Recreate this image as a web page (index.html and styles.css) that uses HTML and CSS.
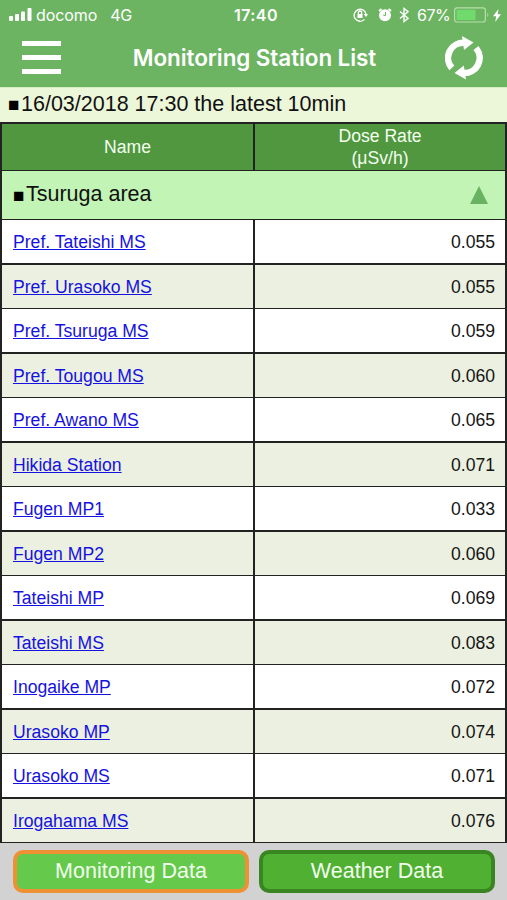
FILE: index.html
```html
<!DOCTYPE html>
<html lang="en">
<head>
<meta charset="utf-8">
<title>Monitoring Station List</title>
<link rel="stylesheet" href="styles.css">
</head>
<body>
<div class="app">
  <header class="top">
    <div class="status">
      <div class="status-left">
        <svg class="signal" width="24" height="14" viewBox="0 0 24 14" fill="#fff"><rect x="0" y="8" width="4" height="5" rx="1"/><rect x="6" y="6" width="4" height="7" rx="1"/><rect x="12" y="3.500" width="4" height="9.500" rx="1"/><rect x="18.500" y="0" width="4" height="13" rx="1"/></svg>
        <span class="carrier">docomo</span><span class="network">4G</span>
      </div>
      <span class="clock">17:40</span>
      <div class="status-right">
        <svg width="16" height="16" viewBox="0 0 16 16" fill="none" stroke="#fff" stroke-width="1.300"><path d="M11.500 12.400A6 6 0 1 1 13 7"/><path d="M10.800 7h4.400l-2.200 3z" fill="#fff" stroke="none"/><rect x="4.500" y="7" width="5" height="4" fill="#fff" stroke="none"/><path d="M5.400 7V5.600a1.600 1.600 0 0 1 3.200 0V7"/></svg>
        <svg class="alarm" width="14" height="16" viewBox="0 0 14 16"><circle cx="7" cy="8.200" r="6" fill="#fff"/><path d="M1 4L3.500 2M13 4L10.500 2" stroke="#fff" stroke-width="2"/><path d="M7.500 5v3.700L5.200 8" fill="none" stroke="#6cb462" stroke-width="1"/></svg>
        <svg class="bluetooth" width="10" height="16" viewBox="0 0 10 16"><path d="M1 4.500l8 6.800L5 14.500v-13l4 3.200-8 6.800" fill="none" stroke="#fff" stroke-width="1.400"/></svg>
        <span class="percent">67%</span>
        <svg width="36" height="16" viewBox="0 0 36 16"><rect x=".6" y=".8" width="30.800" height="14.200" rx="2.500" fill="none" stroke="#b4dfa9" stroke-width="1.200"/><rect x="2.500" y="2.800" width="19" height="10.200" fill="#70da6d"/><path d="M33.300 5.500q2 2.400 0 4.800z" fill="#b4dfa9"/></svg>
        <svg class="bolt" width="8" height="13" viewBox="0 0 8 13"><path d="M5.500 0L0 7.200h3.200L2.200 13 8 5.200H4.700z" fill="#fff"/></svg>
      </div>
    </div>
    <div class="nav">
      <div class="menu"><i></i><i></i><i></i></div>
      <h1>Monitoring Station List</h1>
      <svg class="refresh" width="38" height="44" viewBox="0 0 38 44"><g fill="none" stroke="#fff" stroke-width="6.500"><path d="M6.800 32A15.200 15.200 0 0 1 20 6.900"/><path d="M31 12A15.200 15.200 0 0 1 18 37"/></g><path d="M17 0L28.500 6.500 19 14zM21 43.500L9.500 37l9.300-7.500z" fill="#fff"/></svg>
    </div>
  </header>
  <div class="stamp"><span class="square">■</span><span class="stamp-text">16/03/2018 17:30 the latest 10min</span></div>
  <main class="table">
    <div class="row head"><div>Name</div><div>Dose Rate<br>(μSv/h)</div></div>
    <div class="area"><span class="square">■</span><span class="area-text">Tsuruga area</span><svg class="up" width="18" height="18" viewBox="0 0 18 18"><path d="M9 0l9 18H0z" fill="#69b262"/></svg></div>
    <div class="row"><div><a href="#">Pref. Tateishi MS</a></div><div>0.055</div></div>
    <div class="row"><div><a href="#">Pref. Urasoko MS</a></div><div>0.055</div></div>
    <div class="row"><div><a href="#">Pref. Tsuruga MS</a></div><div>0.059</div></div>
    <div class="row"><div><a href="#">Pref. Tougou MS</a></div><div>0.060</div></div>
    <div class="row"><div><a href="#">Pref. Awano MS</a></div><div>0.065</div></div>
    <div class="row"><div><a href="#">Hikida Station</a></div><div>0.071</div></div>
    <div class="row"><div><a href="#">Fugen MP1</a></div><div>0.033</div></div>
    <div class="row"><div><a href="#">Fugen MP2</a></div><div>0.060</div></div>
    <div class="row"><div><a href="#">Tateishi MP</a></div><div>0.069</div></div>
    <div class="row"><div><a href="#">Tateishi MS</a></div><div>0.083</div></div>
    <div class="row"><div><a href="#">Inogaike MP</a></div><div>0.072</div></div>
    <div class="row"><div><a href="#">Urasoko MP</a></div><div>0.074</div></div>
    <div class="row"><div><a href="#">Urasoko MS</a></div><div>0.071</div></div>
    <div class="row"><div><a href="#">Irogahama MS</a></div><div>0.076</div></div>
  </main>
  <footer class="tabs"><div class="tab active">Monitoring Data</div><div class="tab">Weather Data</div></footer>
</div>
</body>
</html>
```

FILE: styles.css
```css
* { box-sizing: border-box; }
body { margin: 0; font-family: "Liberation Sans", Arial, sans-serif; }
.app { width: 507px; height: 900px; display: flex; flex-direction: column; overflow: hidden; background: #d2d2d2; }
.top { height: 87px; background: #6cb462; color: #fff; font-family: Inter, sans-serif; }
.status { height: 30px; display: grid; grid-template-columns: 1fr auto 1fr; align-items: center; padding: 0 6px 0 9px; }
.status-left, .status-right { display: flex; align-items: center; }
.status-right { justify-content: flex-end; }
.carrier { margin-left: 3px; font-size: 16px; letter-spacing: -.1px; }
.network { margin-left: 13px; font-size: 16px; letter-spacing: -.3px; }
.clock { position: relative; left: 1px; font-size: 16px; font-weight: 600; letter-spacing: .4px; }
.alarm { margin-left: 9px; }
.bluetooth { margin-left: 7px; }
.percent { margin: 0 4px 0 8px; font-size: 16px; letter-spacing: -.6px; }
.bolt { margin-left: 3px; }
.nav { height: 57px; display: flex; align-items: center; padding: 0 24px 0 22px; }
.menu { width: 39px; height: 33px; margin-top: -2px; display: flex; flex-direction: column; justify-content: space-between; }
.menu i { height: 5px; background: #fff; }
h1 { flex: 1; margin: 0; padding: 0 0 2px 3px; text-align: center; font-size: 22.500px; font-weight: 600; letter-spacing: -.1px; }
.refresh { margin-top: -2px; }
.stamp { height: 35px; display: flex; align-items: center; padding: 0 8px 2px; background: #ecf6d9; border-top: 1px solid #d9edc4; font-size: 21.500px; color: #111; }
.square { font-size: 19px; line-height: 20px; width: 13px; padding-top: 2px; color: #000; }
.table { height: 721px; display: grid; grid-template-rows: 47px 49px repeat(14, 44.5px); padding-top: 2px; background: #222; }
.row { display: grid; grid-template-columns: 251px 250px; column-gap: 2px; padding: 0 2px 1.5px; font-size: 17.600px; line-height: 22px; color: #151515; }
.row > div { display: flex; align-items: center; padding: 1px 10px 0 11px; background: #fff; }
.row > div:last-child { justify-content: flex-end; }
.row:nth-child(even) > div { background: #ebf0e0; }
.row.head > div { justify-content: center; text-align: center; padding: 0; background: #50973f; color: #f4fff0; }
.row a { color: #1612e0; text-decoration: underline; }
.area { display: flex; align-items: center; margin: 0 2px 1.5px; padding: 0 17px 0 11px; background: #c1f4b5; font-size: 21.500px; color: #111; }
.up { margin-left: auto; }
.tabs { flex: 1; display: flex; align-items: flex-start; gap: 10px; padding: 7px 12px 0 13px; background: #d2d2d2; }
.tab { flex: 1; height: 43px; border: 4px solid #388522; border-radius: 10px; background: #50b032; color: #f2ffef; font-size: 21.500px; line-height: 34px; text-align: center; }
.tab.active { border-color: #ee9135; background: #65c94b; }
```
